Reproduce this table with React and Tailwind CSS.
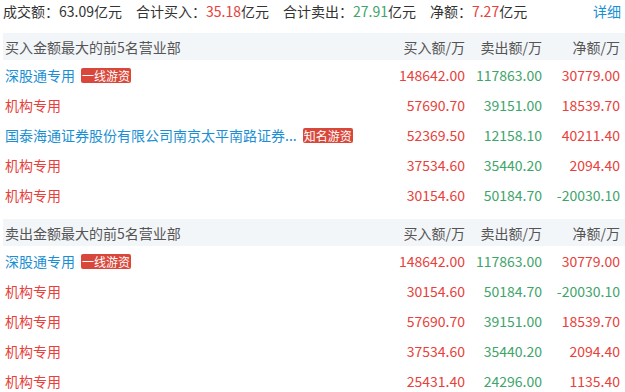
import React from 'react';

const buyRows = [
  { name: '深股通专用', kind: 'blue', tag: '一线游资', buy: '148642.00', sell: '117863.00', net: '30779.00' },
  { name: '机构专用', kind: 'red', buy: '57690.70', sell: '39151.00', net: '18539.70' },
  { name: '国泰海通证券股份有限公司南京太平南路证券营业部', kind: 'blue', tag: '知名游资', buy: '52369.50', sell: '12158.10', net: '40211.40', clip: true },
  { name: '机构专用', kind: 'red', buy: '37534.60', sell: '35440.20', net: '2094.40' },
  { name: '机构专用', kind: 'red', buy: '30154.60', sell: '50184.70', net: '-20030.10' },
];

const sellRows = [
  { name: '深股通专用', kind: 'blue', tag: '一线游资', buy: '148642.00', sell: '117863.00', net: '30779.00' },
  { name: '机构专用', kind: 'red', buy: '30154.60', sell: '50184.70', net: '-20030.10' },
  { name: '机构专用', kind: 'red', buy: '57690.70', sell: '39151.00', net: '18539.70' },
  { name: '机构专用', kind: 'red', buy: '37534.60', sell: '35440.20', net: '2094.40' },
  { name: '机构专用', kind: 'red', buy: '25431.40', sell: '24296.00', net: '1135.40' },
];

function Row({ r }) {
  const netColor = r.net.startsWith('-') ? 'text-[#3ea56b]' : 'text-[#e8413b]';
  return (
    <div className="flex items-center h-[30px] pl-[5px] pr-[5px]">
      <div className="flex-1 flex items-center min-w-0">
        <span className={r.kind === 'blue' ? 'text-[#1b8fd3] truncate' : 'text-[#e8413b]'}>
          {r.clip ? '国泰海通证券股份有限公司南京太平南路证券...' : r.name}
        </span>
        {r.tag && (
          <span className="ml-[6px] shrink-0 bg-[#d9473b] text-white text-[12px] leading-[15px] px-[1px] rounded-[2px]">
            {r.tag}
          </span>
        )}
      </div>
      <div className="w-[80px] text-right text-[#e8413b]">{r.buy}</div>
      <div className="w-[77px] text-right text-[#3ea56b]">{r.sell}</div>
      <div className={'w-[78px] text-right ' + netColor}>{r.net}</div>
    </div>
  );
}

function Section({ title, rows }) {
  return (
    <div>
      <div className="flex items-center h-[27px] ml-[3px] pl-[2px] pr-[5px] bg-[#f3f6f9] text-[#555]">
        <div className="flex-1">{title}</div>
        <div className="w-[80px] text-right">买入额/万</div>
        <div className="w-[77px] text-right">卖出额/万</div>
        <div className="w-[78px] text-right">净额/万</div>
      </div>
      {rows.map((r, i) => <Row key={i} r={r} />)}
    </div>
  );
}

export default function App() {
  return (
    <div
      className="w-[625px] h-[392px] bg-white overflow-hidden text-[14px] leading-[20px]"
      style={{ fontFamily: '"Noto Sans CJK SC", "Microsoft YaHei", sans-serif' }}
    >
      <div className="flex items-center h-[21px] pl-[3px] pr-[4px] text-[#333]">
        <span>成交额：63.09亿元</span>
        <span className="ml-[14px]">合计买入：<span className="text-[#e8413b]">35.18</span>亿元</span>
        <span className="ml-[14px]">合计卖出：<span className="text-[#3ea56b]">27.91</span>亿元</span>
        <span className="ml-[14px]">净额：<span className="text-[#e8413b]">7.27</span>亿元</span>
        <span className="ml-auto text-[#1b8fd3]">详细</span>
      </div>
      <div className="mt-[12px]">
        <Section title="买入金额最大的前5名营业部" rows={buyRows} />
      </div>
      <div className="mt-[9px]">
        <Section title="卖出金额最大的前5名营业部" rows={sellRows} />
      </div>
    </div>
  );
}
